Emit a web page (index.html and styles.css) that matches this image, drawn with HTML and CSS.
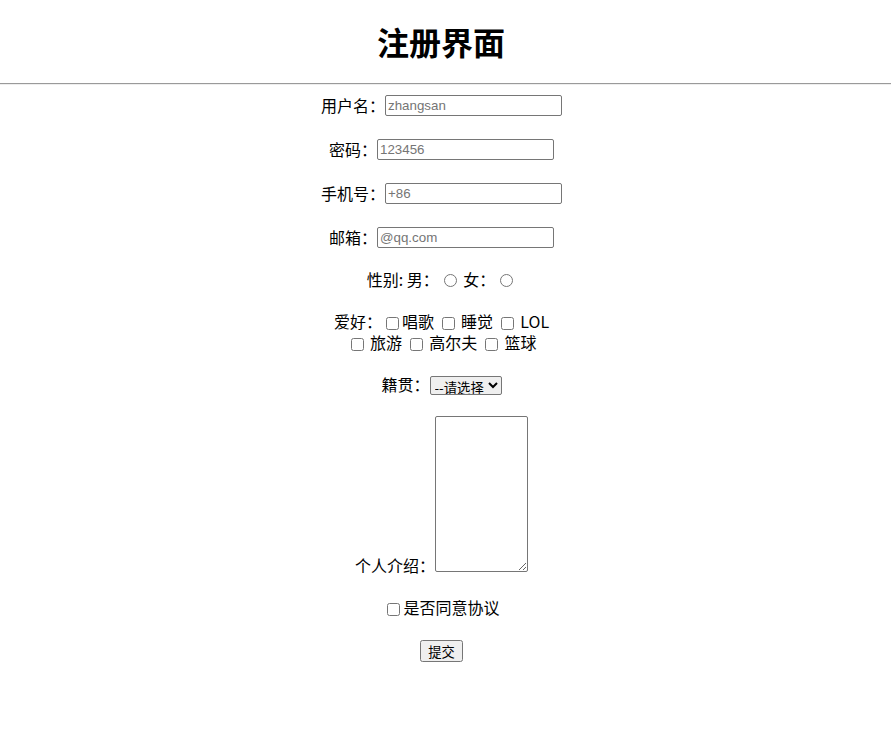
FILE: index.html
```html
<!DOCTYPE html>
<html lang="zh-CN">

<head>
    <meta charset="UTF-8">
    <title>注册界面</title>
    <link rel="stylesheet" href="styles.css">
</head>

<body>
    <h1 class="title">注册界面</h1>
    <hr>
    <form class="reg-form">
        用户名：<input type="text" placeholder="zhangsan"><br><br>
        密码：<input type="password" class="pwd" placeholder="123456"><br><br>
        手机号：<input type="text" placeholder="+86"><br><br>
        邮箱：<input type="email" placeholder="@qq.com"><br><br>
        性别: 男：<input type="radio" name="sex"> 女：<input type="radio" name="sex"><br><br>
        爱好：<input type="checkbox">唱歌
        <input type="checkbox"> 睡觉
        <input type="checkbox"> LOL<br>
        <input type="checkbox"> 旅游
        <input type="checkbox"> 高尔夫
        <input type="checkbox"> 篮球<br><br>
        籍贯：<select>
            <option>--请选择</option>
            <option>北京</option>
            <option>上海</option>
        </select><br><br>
        个人介绍：<textarea></textarea><br><br>
        <input type="checkbox">是否同意协议<br><br>
        <input type="submit" value="提交">
    </form>
</body>

</html>
```

FILE: styles.css
```css
body {
    margin: 0;
    font-family: "Microsoft YaHei", "Noto Sans CJK SC", sans-serif;
    font-size: 16px;
    line-height: 21px;
    color: #000;
}

.title {
    text-align: center;
    font-size: 32px;
    line-height: 42px;
    margin: 20px 9px 21px 0;
}

hr {
    margin: 0 0 8px;
    border: none;
    border-top: 1px solid #9a9a9a;
    border-bottom: 1px solid #eee;
}

.reg-form {
    width: 300px;
    margin: 0 auto;
    text-align: center;
    position: relative;
    left: -4px;
}

input[type="text"],
input[type="password"],
input[type="email"] {
    box-sizing: border-box;
    width: 177px;
    height: 21px;
    padding: 1px 2px;
    margin: 2px 0 0;
    font-family: "Liberation Sans", Arial, sans-serif;
    font-size: 13.33px;
    border: 1px solid #767676;
    border-radius: 2px;
    vertical-align: bottom;
}

input::placeholder {
    color: #757575;
}

input[type="radio"] {
    margin: 0 3px 0 5px;
    vertical-align: -1px;
}

input[type="checkbox"] {
    margin: 0 3px 0 4px;
    vertical-align: -2px;
}

select {
    box-sizing: border-box;
    font-family: "Noto Sans CJK SC", sans-serif;
    font-size: 13.33px;
    height: 19px;
    padding: 0;
    border: 1px solid #767676;
    border-radius: 2px;
    vertical-align: bottom;
}

textarea {
    width: 87px;
    height: 150px;
    border: 1px solid #767676;
    border-radius: 2px;
}

input[type="submit"] {
    box-sizing: border-box;
    font-family: "Noto Sans CJK SC", sans-serif;
    font-size: 13.33px;
    line-height: 18px;
    height: 22px;
    padding: 0 6px;
    margin: 1px 0 0;
    vertical-align: bottom;
}
```
